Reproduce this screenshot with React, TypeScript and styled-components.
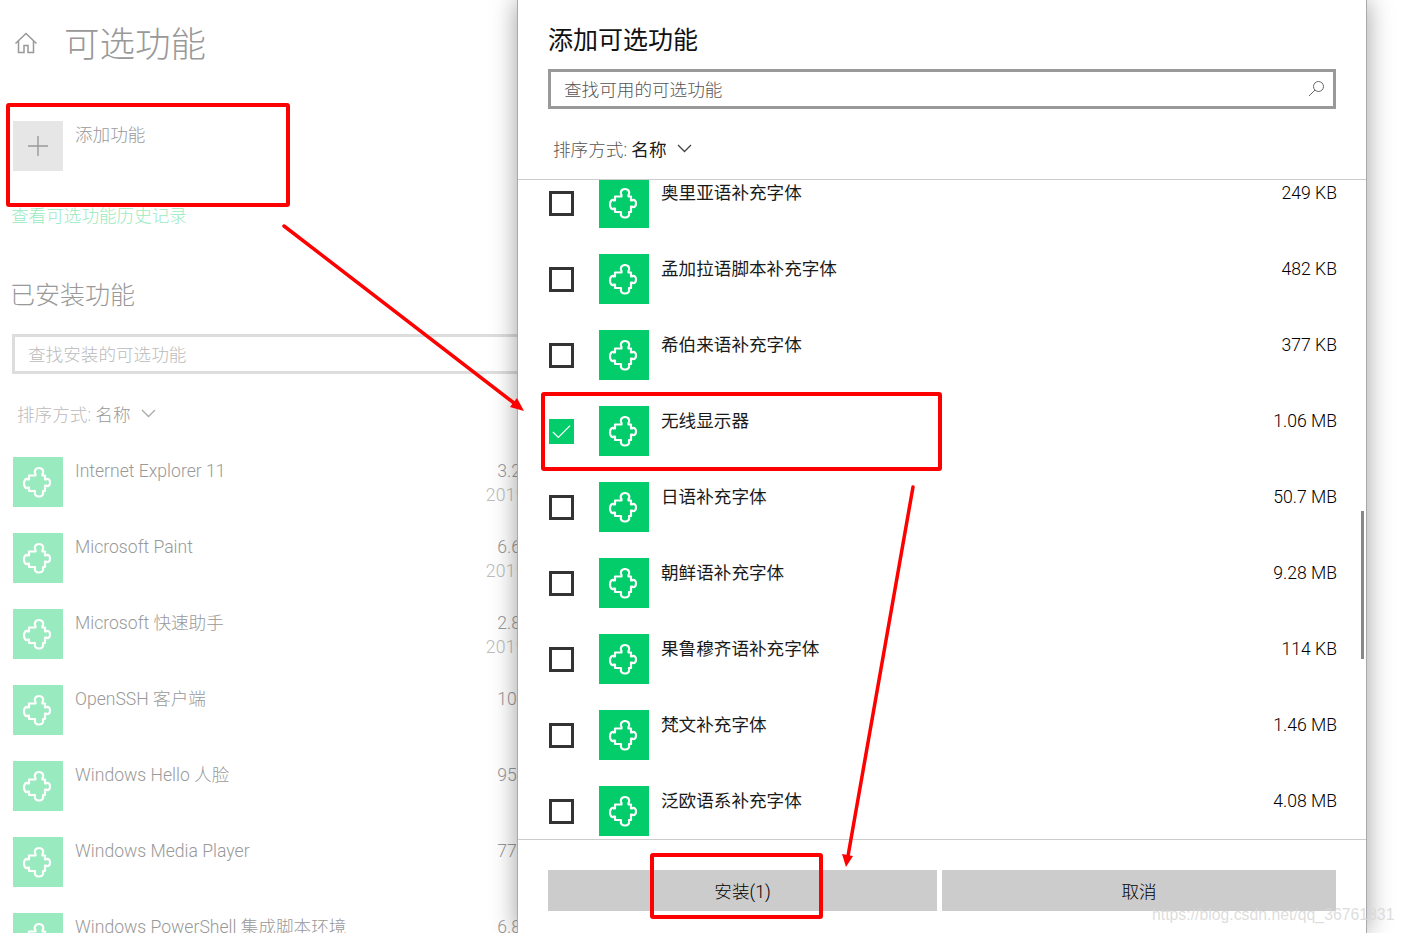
import React from "react";
import styled, { createGlobalStyle } from "styled-components";

const GlobalStyle = createGlobalStyle`
  html, body {
    margin: 0;
    padding: 0;
    background: #fff;
  }
  body {
    font-family: Roboto, "Noto Sans CJK SC", sans-serif;
    font-weight: 300;
  }
`;

const SPage = styled.div`
  position: relative;
  display: flex;
  width: 1402px;
  height: 933px;
  overflow: hidden;
  background: #fff;
`;

const SLeftPane = styled.div`
  width: 517px;
  height: 933px;
  flex-shrink: 0;
  overflow: hidden;
  padding: 22px 0 0 12px;
  box-sizing: border-box;
  color: #999;
`;

const SLeftInner = styled.div`
  width: 549px;
`;

const SPageHead = styled.div`
  display: flex;
  align-items: center;
  height: 42px;
  gap: 26px;
  padding-left: 2px;
`;

const STitle = styled.h1`
  margin: 4px 0 0;
  font-size: 35.5px;
  line-height: 42px;
  font-weight: 300;
  color: #999;
`;

const SAddRow = styled.div`
  display: flex;
  gap: 12px;
  margin: 57px 0 0 1px;
  height: 50px;
`;

const SAddTile = styled.div`
  width: 50px;
  height: 50px;
  background: #e6e6e6;
  display: flex;
  align-items: center;
  justify-content: center;
`;

const SRowText = styled.div<{ $dark?: boolean }>`
  font-size: 17.6px;
  line-height: 24px;
  margin-top: 2px;
  white-space: nowrap;
  font-weight: ${({ $dark }) => ($dark ? 400 : 300)};
  color: ${({ $dark }) => ($dark ? "#1a1a1a" : "#999")};
`;

const SHistoryLink = styled.div`
  margin: 33px 0 0 -1px;
  font-size: 17.6px;
  line-height: 24px;
  color: #9aeac0;
`;

const SSectionTitle = styled.h2`
  margin: 50px 0 0 -2px;
  font-size: 25px;
  line-height: 36px;
  font-weight: 300;
  color: #999;
`;

const SSearchBox = styled.div<{ $active?: boolean }>`
  display: flex;
  align-items: center;
  justify-content: space-between;
  height: 40px;
  box-sizing: border-box;
  padding: 0 8px 2px 13px;
  border: 3px solid ${({ $active }) => ($active ? "#999" : "#ddd")};
  font-size: 17.6px;
  color: ${({ $active }) => ($active ? "#555" : "#bbb")};
`;

const SLeftSearch = styled(SSearchBox as any)`
  margin-top: 20px;
`;

const SSortBar = styled.div<{ $dark?: boolean }>`
  display: flex;
  align-items: center;
  gap: 10px;
  height: 24px;
  font-size: 17.6px;
  color: ${({ $dark }) => ($dark ? "#555" : "#bbb")};
  & b {
    font-weight: ${({ $dark }) => ($dark ? 400 : 300)};
    color: ${({ $dark }) => ($dark ? "#1a1a1a" : "#999")};
  }
`;

const SLeftSort = styled(SSortBar as any)`
  margin: 27px 0 0 5px;
`;

const SLeftList = styled.div`
  margin: 32px 0 0 1px;
`;

const SLeftRow = styled.div`
  display: flex;
  gap: 12px;
  height: 76px;
`;

const STile = styled.div<{ $pale?: boolean }>`
  width: 50px;
  height: 50px;
  flex-shrink: 0;
  display: flex;
  align-items: center;
  justify-content: center;
  background: ${({ $pale }) => ($pale ? "#9aeac0" : "#03cc6a")};
`;

const SLeftMeta = styled.div`
  margin-left: auto;
  text-align: right;
  font-size: 17.6px;
  line-height: 24px;
  padding-top: 2px;
  white-space: nowrap;
  color: #999;
  & span {
    display: block;
    color: #bbb;
    letter-spacing: 0.35px;
  }
`;

const SDialog = styled.div`
  width: 850px;
  height: 933px;
  flex-shrink: 0;
  box-sizing: border-box;
  background: #fff;
  border-left: 1px solid #aaa;
  border-right: 1px solid #aaa;
  box-shadow: 0 0 24px rgba(0, 0, 0, 0.38);
  display: flex;
  flex-direction: column;
  position: relative;
`;

const SDialogHead = styled.div`
  padding: 23px 30px 0;
  height: 180px;
  box-sizing: border-box;
  border-bottom: 1px solid #ccc;
`;

const SDialogTitle = styled.h2`
  margin: 0 0 10px;
  font-size: 25px;
  line-height: 36px;
  font-weight: 400;
  color: #111;
`;

const SDialogSort = styled(SSortBar as any)`
  margin: 27px 0 0 5px;
`;

const SList = styled.div`
  height: 659px;
  overflow: hidden;
  border-bottom: 1px solid #ccc;
`;

const SListRow = styled.div`
  display: flex;
  align-items: flex-start;
  height: 76px;
  padding: 0 29px 0 31px;
  position: relative;
  top: -2px;
`;

const SCheckBox = styled.div<{ $checked?: boolean }>`
  width: 25px;
  height: 25px;
  box-sizing: border-box;
  margin: 13px 25px 0 0;
  flex-shrink: 0;
  display: flex;
  align-items: center;
  justify-content: center;
  border: 3px solid ${({ $checked }) => ($checked ? "#03cc6a" : "#333")};
  background: ${({ $checked }) => ($checked ? "#03cc6a" : "#fff")};
`;

const SListName = styled(SRowText as any)`
  margin: 3px 0 0 12px;
  flex: 1;
`;

const SListSize = styled(SRowText as any)`
  margin: 3px 0 0;
  font-weight: 300;
  color: #000;
`;

const SFooter = styled.div`
  display: flex;
  gap: 5px;
  padding: 30px 30px 0;
`;

const SFooterButton = styled.button<{ $w: number }>`
  width: ${({ $w }) => $w}px;
  height: 41px;
  border: 0;
  padding: 0;
  background: #ccc;
  color: #000;
  font: inherit;
  font-size: 17.6px;
  font-weight: 300;
`;

const SScrollThumb = styled.div`
  position: absolute;
  left: 843px;
  top: 511px;
  width: 3px;
  height: 148px;
  background: #888;
`;

const SOverlay = styled.svg`
  position: absolute;
  left: 0;
  top: 0;
  pointer-events: none;
`;

const SWatermark = styled.div`
  position: absolute;
  left: 1152px;
  top: 904px;
  font-family: "Liberation Sans", sans-serif;
  font-weight: 400;
  font-size: 15.8px;
  line-height: 22px;
  color: rgba(215, 215, 215, 0.85);
  white-space: nowrap;
`;

const PuzzleIcon = () => (
  <svg width="50" height="50" viewBox="0 0 50 50" fill="none">
    <path
      d="M16 18.5 H22.5 V17 C20.8 15 22 11 26 11 C30 11 31.2 15 29.5 17 V18.5 H32 V22.5 H33 C35.5 21 37 23 37 25.5 C37 28 35.5 30 33 28.5 H32 V34 H30 V35.5 C30.8 37.5 29 39.5 26 39.5 C23 39.5 21.2 37.5 22 35.5 V34 H16 V30.5 H15 C13 32 11 30 11 26.5 C11 23 13 21 15 22.5 H16 Z"
      stroke="#fff"
      strokeWidth="2.2"
      strokeLinejoin="round"
    />
  </svg>
);

const HomeIcon = () => (
  <svg width="24" height="24" viewBox="0 0 24 24" fill="none" stroke="#999" strokeWidth="1.5">
    <path d="M1.5 12.5 L12 2.5 L22.5 12.5" />
    <path d="M4.5 10 V21.5 H10 V14.5 H14 V21.5 H19.5 V10" />
  </svg>
);

const Chevron = ({ color }: { color: string }) => (
  <svg width="15" height="9" viewBox="0 0 15 9" fill="none" stroke={color} strokeWidth="1.3">
    <path d="M1 1 L7.5 7.5 L14 1" />
  </svg>
);

const leftRows = [
  { name: "Internet Explorer 11", size: "3.21 MB", date: "2019/3/7" },
  { name: "Microsoft Paint", size: "6.64 MB", date: "2019/3/7" },
  { name: "Microsoft 快速助手", size: "2.81 MB", date: "2019/3/7" },
  { name: "OpenSSH 客户端", size: "10.1 MB" },
  { name: "Windows Hello 人脸", size: "95.3 MB" },
  { name: "Windows Media Player", size: "77.2 MB" },
  { name: "Windows PowerShell 集成脚本环境", size: "6.83 MB" },
];

const dialogRows = [
  { name: "奥里亚语补充字体", size: "249 KB" },
  { name: "孟加拉语脚本补充字体", size: "482 KB" },
  { name: "希伯来语补充字体", size: "377 KB" },
  { name: "无线显示器", size: "1.06 MB", checked: true },
  { name: "日语补充字体", size: "50.7 MB" },
  { name: "朝鲜语补充字体", size: "9.28 MB" },
  { name: "果鲁穆齐语补充字体", size: "114 KB" },
  { name: "梵文补充字体", size: "1.46 MB" },
  { name: "泛欧语系补充字体", size: "4.08 MB" },
];

const App = () => (
  <SPage>
    <GlobalStyle />
    <SLeftPane>
      <SLeftInner>
        <SPageHead>
          <HomeIcon />
          <STitle>可选功能</STitle>
        </SPageHead>
        <SAddRow>
          <SAddTile>
            <svg width="22" height="22" viewBox="0 0 22 22" stroke="#999" strokeWidth="1.4">
              <path d="M11 1 V21 M1 11 H21" />
            </svg>
          </SAddTile>
          <SRowText>添加功能</SRowText>
        </SAddRow>
        <SHistoryLink>查看可选功能历史记录</SHistoryLink>
        <SSectionTitle>已安装功能</SSectionTitle>
        <SLeftSearch>查找安装的可选功能</SLeftSearch>
        <SLeftSort>
          <span>
            排序方式: <b>名称</b>
          </span>
          <Chevron color="#aaa" />
        </SLeftSort>
        <SLeftList>
          {leftRows.map((row) => (
            <SLeftRow key={row.name}>
              <STile $pale>
                <PuzzleIcon />
              </STile>
              <SRowText>{row.name}</SRowText>
              <SLeftMeta>
                {row.size}
                {row.date && <span>{row.date}</span>}
              </SLeftMeta>
            </SLeftRow>
          ))}
        </SLeftList>
      </SLeftInner>
    </SLeftPane>

    <SDialog>
      <SDialogHead>
        <SDialogTitle>添加可选功能</SDialogTitle>
        <SSearchBox $active>
          查找可用的可选功能
          <svg width="17" height="17" viewBox="0 0 17 17" fill="none" stroke="#666" strokeWidth="1">
            <circle cx="10.5" cy="6.5" r="5" />
            <path d="M7 10 L1 16" />
          </svg>
        </SSearchBox>
        <SDialogSort $dark>
          <span>
            排序方式: <b>名称</b>
          </span>
          <Chevron color="#444" />
        </SDialogSort>
      </SDialogHead>
      <SList>
        {dialogRows.map((row) => (
          <SListRow key={row.name}>
            <SCheckBox $checked={row.checked}>
              {row.checked && (
                <svg width="21" height="17" viewBox="0 0 21 17" fill="none" stroke="#fff" strokeWidth="1.4">
                  <path d="M1 9 L7 15 L20 2" />
                </svg>
              )}
            </SCheckBox>
            <STile>
              <PuzzleIcon />
            </STile>
            <SListName $dark>{row.name}</SListName>
            <SListSize $dark>{row.size}</SListSize>
          </SListRow>
        ))}
      </SList>
      <SFooter>
        <SFooterButton $w={389}>安装(1)</SFooterButton>
        <SFooterButton $w={394}>取消</SFooterButton>
      </SFooter>
      <SScrollThumb />
    </SDialog>

    <SOverlay width="1402" height="933" viewBox="0 0 1402 933" fill="none">
      <g stroke="#fe0000" strokeWidth="4" strokeLinejoin="round">
        <rect x="8" y="105" width="280" height="100" rx="1" />
        <rect x="543" y="394" width="397" height="75" rx="1" />
        <rect x="652" y="855" width="169" height="62" rx="1" />
      </g>
      <g stroke="#fe0000" strokeWidth="3.5" strokeLinecap="round">
        <path d="M284 226 L514 403" />
        <path d="M913 487 L848 856" />
      </g>
      <g fill="#fe0000">
        <path d="M524 411 L510 407 L517 398 Z" />
        <path d="M846 867 L842 854 L853 856 Z" />
      </g>
    </SOverlay>
    <SWatermark>https://blog.csdn.net/qq_36761831</SWatermark>
  </SPage>
);

export default App;
